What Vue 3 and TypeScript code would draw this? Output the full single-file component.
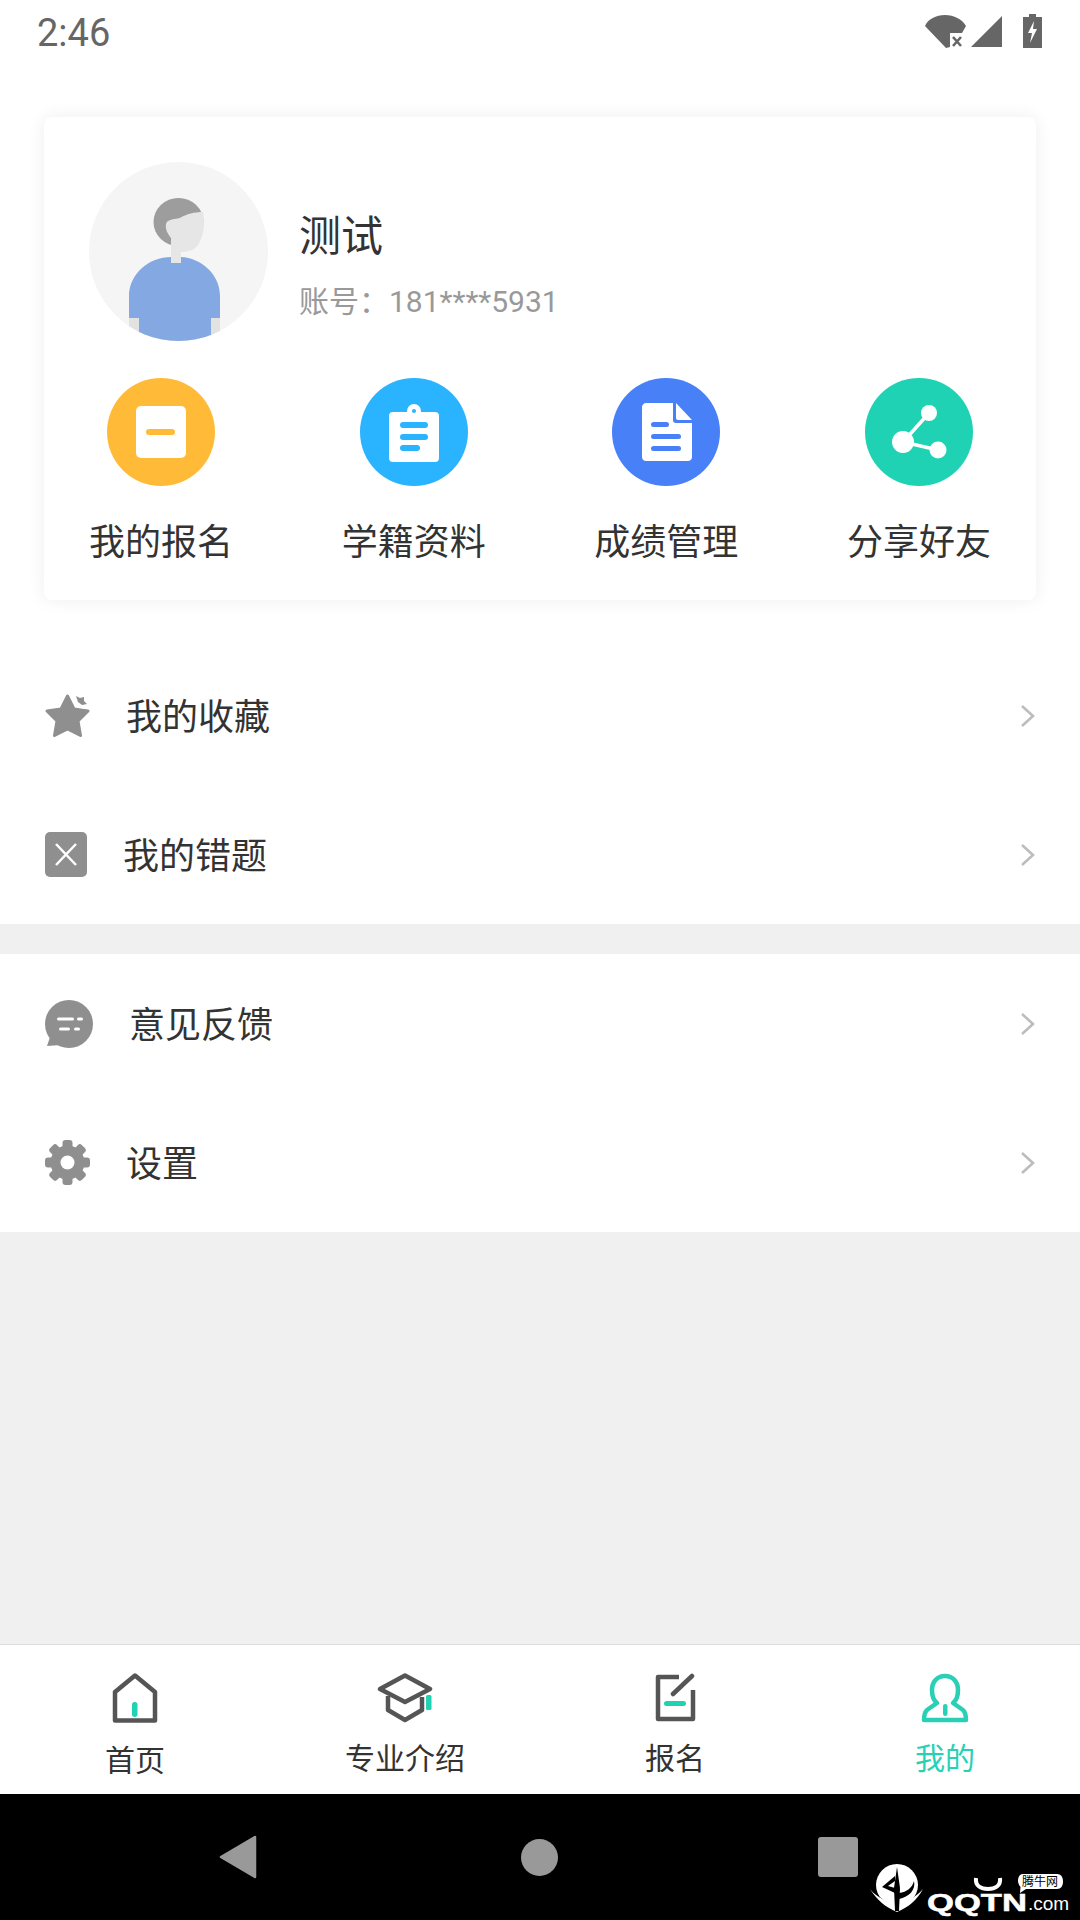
<script setup lang="ts">
interface Action { label: string; color: string; kind: string }
interface Row { label: string; kind: string }
interface Tab { label: string; kind: string; active?: boolean; low?: boolean }

const actions: Action[] = [
  { label: '我的报名', color: '#ffbb38', kind: 'form' },
  { label: '学籍资料', color: '#2ab3ff', kind: 'clip' },
  { label: '成绩管理', color: '#4880f8', kind: 'doc' },
  { label: '分享好友', color: '#20d2b4', kind: 'share' },
]
const groupA: Row[] = [
  { label: '我的收藏', kind: 'star' },
  { label: '我的错题', kind: 'wrong' },
]
const groupB: Row[] = [
  { label: '意见反馈', kind: 'chat' },
  { label: '设置', kind: 'gear' },
]
const tabs: Tab[] = [
  { label: '首页', kind: 'home', low: true },
  { label: '专业介绍', kind: 'cap' },
  { label: '报名', kind: 'sign' },
  { label: '我的', kind: 'me', active: true },
]
const gearTeeth: number[] = [0, 45, 90, 135, 180, 225, 270, 315]
</script>

<template>
  <div class="screen">
    <header class="status">
      <span class="time">2:46</span>
      <div class="status-icons">
        <svg class="st-wifi" viewBox="0 0 41 33" width="41" height="33">
          <path d="M0 11 C3 4 11 0 20 0 C29 0 37 4 41 11 L37 18 H25 V32 L21 33 Z" fill="#666" />
          <path d="M28 22 L36 31 M36 22 L28 31" stroke="#666" stroke-width="2.6" fill="none" />
        </svg>
        <svg class="st-signal" viewBox="0 0 31 31" width="31" height="31">
          <path d="M31 0 V31 H0 Z" fill="#666" />
        </svg>
        <svg class="st-batt" viewBox="0 0 19 34" width="19" height="34">
          <path d="M6 0 H13 V3 H19 V34 H0 V3 H6 Z" fill="#666" />
          <path d="M11 7 L5 19 H9 L7 29 L14 15 H10 Z" fill="#fff" />
        </svg>
      </div>
    </header>

    <div class="top">
      <section class="card">
        <div class="profile">
          <svg class="avatar" viewBox="0 0 179 179" width="179" height="179">
            <defs>
              <clipPath id="avatar-clip"><circle cx="89.5" cy="89.5" r="89.5" /></clipPath>
            </defs>
            <circle cx="89.5" cy="89.5" r="89.5" fill="#f5f5f5" />
            <g clip-path="url(#avatar-clip)">
              <ellipse cx="89.500" cy="60" rx="25" ry="24" fill="#9d9d9d" />
              <path d="M77 62 C78 57 87 57 91 56 C97 52 106 50 114 50 C116 62 115 74 109 83 C105 88 100 90 92 90 V101 H82 V76 C79 72 76 68 77 62 Z" fill="#e6e6e6" />
              <rect x="40" y="150" width="91" height="29" fill="#e2e2e2" />
              <path d="M40 156 V134 C40 112 60 95 82 95 V101 H92 V95 C112 96 131 112 131 134 V156 H122 V179 H50 V156 Z" fill="#84a8e2" />
            </g>
          </svg>
          <div class="who">
            <div class="name">测试</div>
            <div class="account">账号：181****5931</div>
          </div>
        </div>
        <div class="actions">
          <div v-for="a in actions" :key="a.label" class="action">
            <svg class="disc" viewBox="0 0 108 108" width="108" height="108">
              <circle cx="54" cy="54" r="54" :fill="a.color" />
              <template v-if="a.kind === 'form'">
                <rect x="29" y="28" width="50" height="52" rx="5" fill="#fff" />
                <rect x="39" y="51" width="29" height="6" rx="3" :fill="a.color" />
              </template>
              <template v-else-if="a.kind === 'clip'">
                <rect x="29" y="34" width="50" height="50" rx="4" fill="#fff" />
                <circle cx="54" cy="33" r="7" fill="#fff" />
                <circle cx="54" cy="33" r="2" :fill="a.color" />
                <rect x="40" y="44" width="28" height="6" rx="3" :fill="a.color" />
                <rect x="40" y="56" width="28" height="6" rx="3" :fill="a.color" />
                <rect x="40" y="67" width="20" height="6" rx="3" :fill="a.color" />
              </template>
              <template v-else-if="a.kind === 'doc'">
                <path d="M34 25 H61 V42 C61 44 62 45 64 45 H80 V79 C80 81.5 78 83 76 83 H34 C32 83 30 81.5 30 79 V29 C30 27 32 25 34 25 Z" fill="#fff" />
                <path d="M64 25 L80 42 H66 C65 42 64 41 64 40 Z" fill="#fff" />
                <rect x="39" y="44" width="18" height="5" rx="2.5" :fill="a.color" />
                <rect x="39" y="56" width="30" height="5" rx="2.5" :fill="a.color" />
                <rect x="39" y="68" width="30" height="5" rx="2.5" :fill="a.color" />
              </template>
              <template v-else>
                <path d="M64 35 L38 64 L73 72" fill="none" stroke="#fff" stroke-width="3.5" />
                <circle cx="64" cy="35" r="8" fill="#fff" />
                <circle cx="38" cy="64" r="11" fill="#fff" />
                <circle cx="73" cy="72" r="8.5" fill="#fff" />
              </template>
            </svg>
            <span class="action-label">{{ a.label }}</span>
          </div>
        </div>
      </section>

      <div class="list">
        <div v-for="r in groupA" :key="r.label" class="row">
          <svg v-if="r.kind === 'star'" viewBox="0 0 45 44" width="45" height="44">
            <path d="M22.5 2 L29 15 L43 17 L33 27 L35.5 41.5 L22.5 35 L9.500 41.500 L12 27 L2 17 L16 15 Z" fill="#8f8f8f" stroke="#8f8f8f" stroke-width="3" stroke-linejoin="round" />
            <path d="M28 3 C29 10 34 14 44 13" fill="none" stroke="#fff" stroke-width="3" />
            <path d="M31 2 L35 4 L39 3 L39 7 L42 10 L37 11 L33 8 Z" fill="#8f8f8f" />
          </svg>
          <svg v-else viewBox="0 0 42 45" width="42" height="45">
            <rect width="42" height="45" rx="5" fill="#8f8f8f" />
            <path d="M11 12 L31 33 M31 12 L11 33" stroke="#fff" stroke-width="2.500" fill="none" />
          </svg>
          <span class="row-label">{{ r.label }}</span>
          <svg class="chev" viewBox="0 0 16 24" width="16" height="24">
            <path d="M2 2 L13 12 L2 22" fill="none" stroke="#bdbdbd" stroke-width="2.600" />
          </svg>
        </div>
      </div>
    </div>

    <div class="band"></div>

    <div class="list">
      <div v-for="r in groupB" :key="r.label" class="row">
        <svg v-if="r.kind === 'chat'" viewBox="0 0 48 48" width="48" height="48">
          <circle cx="24" cy="24" r="24" fill="#8f8f8f" />
          <path d="M6 34 L2 46 L16 45 Z" fill="#8f8f8f" />
          <path d="M13.500 19 H27.500 M33.500 19 H36.500 M15.500 29 H23.500 M30.500 29 H33.500" stroke="#fff" stroke-width="3" stroke-linecap="round" fill="none" />
        </svg>
        <svg v-else viewBox="0 0 45 45" width="45" height="45">
          <g fill="#8f8f8f">
            <rect v-for="d in gearTeeth" :key="d" x="17.500" y="0" width="10" height="12" rx="3" :transform="`rotate(${d} 22.5 22.5)`" />
          </g>
          <circle cx="22.500" cy="22.500" r="12" fill="none" stroke="#8f8f8f" stroke-width="10" />
        </svg>
        <span class="row-label">{{ r.label }}</span>
        <svg class="chev" viewBox="0 0 16 24" width="16" height="24">
          <path d="M2 2 L13 12 L2 22" fill="none" stroke="#bdbdbd" stroke-width="2.600" />
        </svg>
      </div>
    </div>

    <div class="fill"></div>

    <nav class="tabs">
      <div v-for="t in tabs" :key="t.label" class="tab" :class="{ active: t.active, low: t.low }">
        <svg class="tab-icon" viewBox="0 0 60 50" width="60" height="50">
          <template v-if="t.kind === 'home'">
            <path d="M30 2.500 L50 19 V47.500 H10 V19 Z" fill="none" stroke="#555" stroke-width="4.500" stroke-linejoin="round" />
            <rect x="27" y="29" width="5.500" height="15" rx="2.700" fill="#20d2b4" />
          </template>
          <template v-else-if="t.kind === 'cap'">
            <path d="M30 2.500 L55 16 L30 29 L5 16 Z" fill="none" stroke="#555" stroke-width="4.500" stroke-linejoin="round" />
            <path d="M13 23 V37 L30 47 L47 37 V24" fill="none" stroke="#555" stroke-width="4.500" stroke-linejoin="round" />
            <rect x="51" y="22" width="5.500" height="15" rx="1.500" fill="#20d2b4" />
          </template>
          <template v-else-if="t.kind === 'sign'">
            <path d="M34 4 H13 V46 H48 V17" fill="none" stroke="#555" stroke-width="4.500" stroke-linejoin="round" />
            <path d="M28 21 L47 3" fill="none" stroke="#555" stroke-width="4.500" stroke-linecap="round" />
            <rect x="19" y="28" width="22" height="5" rx="2.500" fill="#20d2b4" />
          </template>
          <template v-else>
            <path d="M22 30 C18 27 17 22 17 17 C17 9 22 3 30 3 C38 3 43 9 43 17 C43 22 42 27 38 30 L48 37 C50 39 51 41 51 47 H9 C9 41 10 39 12 37 Z" fill="none" stroke="#2ad0b5" stroke-width="4.500" stroke-linejoin="round" />
            <rect x="28" y="31" width="4.500" height="12" rx="2.200" fill="#2ad0b5" />
          </template>
        </svg>
        <span class="tab-label">{{ t.label }}</span>
      </div>
    </nav>

    <footer class="sysnav">
      <svg viewBox="0 0 38 44" width="38" height="44">
        <path d="M36 2 V42 L2 22 Z" fill="#999" stroke="#999" stroke-width="2.500" stroke-linejoin="round" />
      </svg>
      <span class="sys-dot"></span>
      <span class="sys-square"></span>
      <svg class="mark" viewBox="0 0 210 60" width="210" height="60">
        <circle cx="32" cy="25" r="21" fill="#fff" />
        <path d="M3 27 C12 42 22 47 32 47 C42 47 52 42 61 27" fill="none" stroke="#000" stroke-width="6" />
        <path d="M5 29 C12 40 20 47 32 52 C44 47 52 40 58 29 C50 38 42 42 32 43 C22 42 12 38 5 29 Z" fill="#fff" />
        <path d="M32 7 L35 28 L34 51 H30 L29 28 Z" fill="#000" />
        <path d="M17 27 L30 16 V21 L23 26 L30 28 V33 Z" fill="#000" />
        <path d="M34 33 C42 32 47 28 49 21 C51 30 44 37 34 39 Z" fill="#000" />
        <path d="M111 18 C110 26 116 29 123 29 C130 29 136 26 135 18" fill="none" stroke="#fff" stroke-width="4" />
        <text x="62" y="51" class="mark-q" textLength="100" lengthAdjust="spacingAndGlyphs">QQTN</text>
        <text x="163" y="50" class="mark-com">.com</text>
        <path d="M158 14 H192 C196 14 198 17 198 21.500 C198 26 196 29 192 29 H161 L155 33 L155.500 27 C151 22 153 14 158 14 Z" fill="#fff" />
        <text x="157" y="26" class="mark-cn">腾牛网</text>
      </svg>
    </footer>
  </div>
</template>

<style>
html, body { margin: 0; padding: 0; background: #fff; }
</style>

<style scoped>
.screen {
  width: 1080px;
  height: 1920px;
  display: flex;
  flex-direction: column;
  background: #fff;
  font-family: Roboto, "Noto Sans CJK SC", sans-serif;
  color: #333;
  overflow: hidden;
}
.status {
  height: 72px;
  flex: none;
  display: flex;
  align-items: flex-start;
  justify-content: space-between;
  padding: 0 38px 0 37px;
  box-sizing: border-box;
}
.time { font-size: 38px; line-height: 66px; color: #666; }
.status-icons { display: flex; align-items: flex-start; padding-top: 14px; }
.st-wifi { margin-top: 1px; }
.st-signal { margin: 2px 0 0 5px; }
.st-batt { margin-left: 21px; }

.top { flex: none; }
.card {
  margin: 45px 44px 46px;
  height: 483px;
  box-sizing: border-box;
  padding: 45px 45px 0;
  background: #fff;
  border-radius: 8px;
  box-shadow: 0 0 18px rgba(0, 0, 0, 0.07);
}
.profile { display: flex; align-items: center; }
.avatar { flex: none; }
.who { margin-left: 31px; padding-top: 27px; }
.name { font-size: 42px; line-height: 56px; color: #333; }
.account { margin-top: 17px; font-size: 30px; line-height: 40px; color: #999; }

.actions { display: flex; justify-content: space-between; margin-top: 37px; }
.action { display: flex; flex-direction: column; align-items: center; width: 144px; }
.disc { display: block; }
.action-label { margin-top: 33px; font-size: 36px; line-height: 48px; white-space: nowrap; color: #333; }

.list { flex: none; background: #fff; }
.row {
  height: 139px;
  display: flex;
  align-items: center;
  gap: 36px;
  padding: 0 44px 0 45px;
  box-sizing: border-box;
}
.row-label { flex: 1; font-size: 36px; color: #333; padding-bottom: 3px; }
.chev { flex: none; margin-left: 1px; }

.band { flex: none; height: 30px; background: #f0f0f0; }
.fill { flex: 1; background: #f0f0f0; }

.tabs {
  flex: none;
  height: 150px;
  box-sizing: border-box;
  display: grid;
  grid-template-columns: repeat(4, 1fr);
  background: #fff;
  border-top: 1px solid #dedede;
}
.tab { display: flex; flex-direction: column; align-items: center; padding-top: 28px; }
.tab-icon { display: block; }
.tab-label { margin-top: 16px; font-size: 30px; line-height: 40px; color: #333; }
.tab.low .tab-label { margin-top: 18px; }
.tab.active .tab-label { color: #2ad0b5; }

.sysnav {
  position: relative;
  flex: none;
  height: 126px;
  background: #000;
  display: flex;
  align-items: center;
  padding: 0 0 0 219px;
  box-sizing: border-box;
}
.sys-dot { width: 37px; height: 37px; border-radius: 50%; background: #999; margin-left: 264px; }
.sys-square { width: 40px; height: 40px; border-radius: 3px; background: #999; margin-left: 260px; }
.mark { position: absolute; left: 865px; top: 66px; }
.mark-q { font-family: "Liberation Sans", sans-serif; font-weight: 700; font-size: 23px; fill: #fff; stroke: #fff; stroke-width: 0.5px; }
.mark-com { font-family: "Liberation Sans", sans-serif; font-size: 19px; fill: #fff; }
.mark-cn { font-family: "Noto Sans CJK SC", sans-serif; font-size: 12px; fill: #000; }
</style>
